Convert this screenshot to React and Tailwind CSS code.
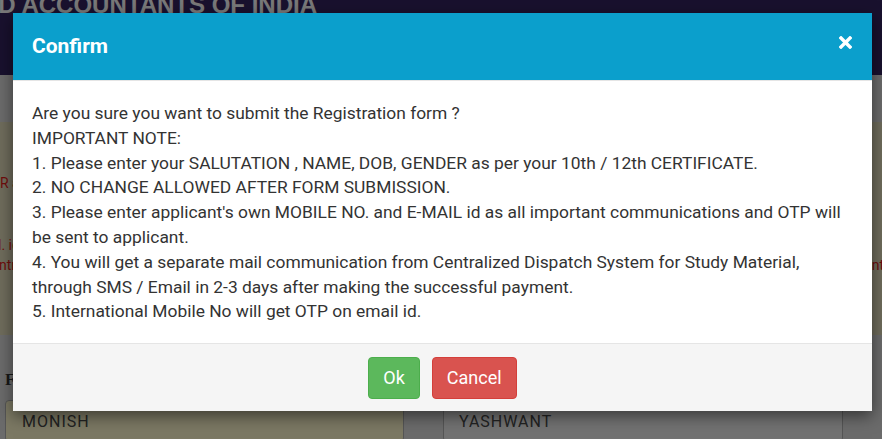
import React from 'react';

const notes = [
  'Are you sure you want to submit the Registration form ?',
  'IMPORTANT NOTE:',
  '1. Please enter your SALUTATION , NAME, DOB, GENDER as per your 10th / 12th CERTIFICATE.',
  '2. NO CHANGE ALLOWED AFTER FORM SUBMISSION.',
  "3. Please enter applicant's own MOBILE NO. and E-MAIL id as all important communications and OTP will be sent to applicant.",
  '4. You will get a separate mail communication from Centralized Dispatch System for Study Material, through SMS / Email in 2-3 days after making the successful payment.',
  '5. International Mobile No will get OTP on email id.',
];

const CloseIcon = () => (
  <svg width="13" height="13" viewBox="0 0 13 13" aria-hidden="true">
    <path d="M2 2 L11 11 M11 2 L2 11" stroke="white" strokeWidth="3.4" strokeLinecap="square" fill="none" />
  </svg>
);

// page behind the dialog (dimmed by the backdrop)
const BackgroundPage = () => (
  <div className="flex flex-col">
    <div className="h-[75px] bg-[#32225c] overflow-hidden">
      <div className="-mt-[7px] -ml-[135px] whitespace-nowrap font-['Liberation_Sans',Arial,sans-serif] text-[24px] font-bold leading-none text-[#f2f2f2]">
        CHARTERED ACCOUNTANTS OF INDIA
      </div>
    </div>
    <div className="h-[47px] bg-[#d7d7d7]" />
    <div className="h-[213px] bg-[#ded8b9] pt-[51px] text-[14px] leading-[20.5px] text-[#e01818] overflow-hidden">
      <div className="whitespace-nowrap">R and address details</div>
      <div className="pl-[60px] whitespace-nowrap">&nbsp;</div>
      <div className="pl-[60px] whitespace-nowrap">&nbsp;</div>
      <div className="-ml-[2px] whitespace-nowrap">l. id for correspondence</div>
      <div className="-ml-[1px] flex justify-between whitespace-nowrap">
        <span>ntral dispatch</span>
        <span className="-mr-[2px]">nt</span>
      </div>
    </div>
    <div className="bg-[#d7d7d7] px-[5px] pt-[33px]">
      <div className="flex gap-[39px]">
        <div className="w-[399px] shrink-0">
          <div className="font-['Liberation_Serif',serif] text-[17px] font-bold leading-[24px] text-[#333]">First Name</div>
          <div className="mt-[8px] h-[42px] rounded-[4px] border border-[#aaa] bg-[#f6f1c6] px-[16px] pt-[9px] text-[16px] tracking-[1px] text-[#444]">MONISH</div>
        </div>
        <div className="w-[400px] shrink-0">
          <div className="font-['Liberation_Serif',serif] text-[17px] font-bold leading-[24px] text-[#333]">Middle Name</div>
          <div className="mt-[8px] h-[42px] rounded-[4px] border border-[#aaa] bg-[#e4e4e4] px-[15px] pt-[9px] text-[16px] tracking-[1px] text-[#444]">YASHWANT</div>
        </div>
        <div className="w-[400px] shrink-0">
          <div className="font-['Liberation_Serif',serif] text-[17px] font-bold leading-[24px] text-[#333]">Last Name</div>
          <div className="mt-[8px] h-[42px] rounded-[4px] border border-[#aaa] bg-[#e4e4e4]" />
        </div>
      </div>
    </div>
  </div>
);

export default function App() {
  return (
    <div className="relative h-[439px] w-[882px] overflow-hidden bg-[#d7d7d7] font-['Roboto',sans-serif]">
      <BackgroundPage />

      {/* backdrop */}
      <div className="absolute inset-0 bg-black/50" />

      {/* dialog */}
      <div className="absolute left-[13px] top-[13px] w-[859px] bg-white shadow-[0_5px_15px_rgba(0,0,0,0.5)]">
        <div className="flex h-[68px] items-center justify-between border-b border-[#e5e5e5] bg-[#0b9fcc] pl-[19px] pr-[20px]">
          <h4 className="text-[21px] font-bold text-white">Confirm</h4>
          <button className="-mt-[8px] flex items-center justify-center">
            <CloseIcon />
          </button>
        </div>

        <div className="px-[19px] pt-[20px] pb-[19px] text-[17.4px] leading-[24.8px] text-[#333]">
          {notes.map((line) => (
            <div key={line}>{line}</div>
          ))}
        </div>

        <div className="flex h-[68px] items-center justify-center gap-[12px] border-t border-[#e5e5e5] bg-[#f5f5f5]">
          <button className="h-[42px] rounded-[4px] border border-[#4cae4c] bg-[#5cb85c] px-[14px] text-[18px] text-white">
            Ok
          </button>
          <button className="h-[42px] rounded-[4px] border border-[#d43f3a] bg-[#d9534f] px-[14px] text-[18px] text-white">
            Cancel
          </button>
        </div>
      </div>
    </div>
  );
}
